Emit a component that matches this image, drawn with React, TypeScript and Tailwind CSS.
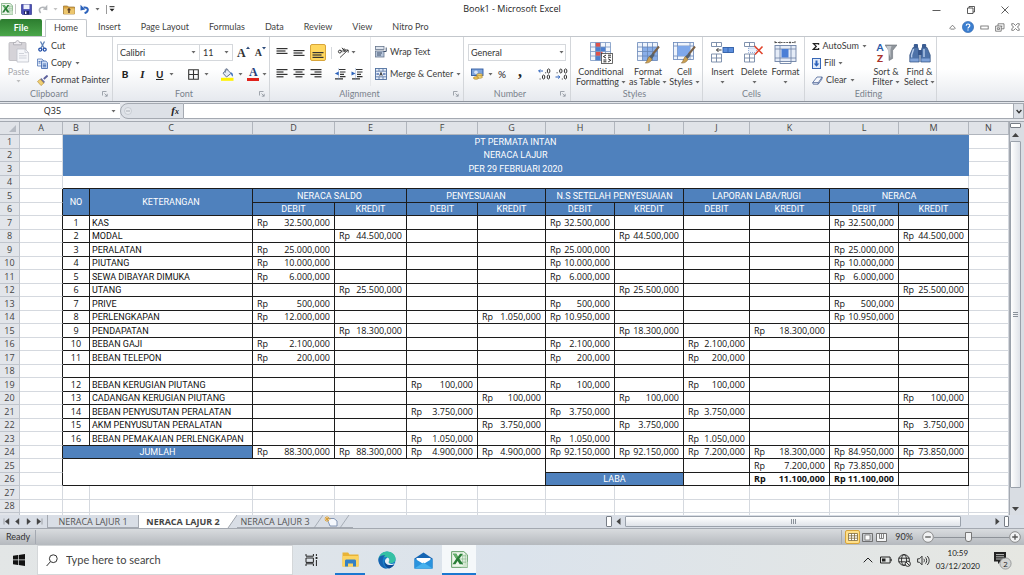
import type { ReactNode } from "react";

type Row = { no: string; name: string; values: Record<string, string> };

const COLUMNS = [
  { name: "A", width: "w-[43px]" },
  { name: "B", width: "w-[27px]" },
  { name: "C", width: "w-[163px]" },
  { name: "D", width: "w-[82px]" },
  { name: "E", width: "w-[72px]" },
  { name: "F", width: "w-[71px]" },
  { name: "G", width: "w-[68px]" },
  { name: "H", width: "w-[69px]" },
  { name: "I", width: "w-[69px]" },
  { name: "J", width: "w-[66px]" },
  { name: "K", width: "w-[80px]" },
  { name: "L", width: "w-[69px]" },
  { name: "M", width: "w-[70px]" },
  { name: "N", width: "" },
];

const MONEY = ["D", "E", "F", "G", "H", "I", "J", "K", "L", "M"];

const TITLES = ["PT PERMATA INTAN", "NERACA LAJUR", "PER 29 FEBRUARI 2020"];

const GROUPS = [
  "NERACA SALDO",
  "PENYESUAIAN",
  "N.S SETELAH PENYESUAIAN",
  "LAPORAN LABA/RUGI",
  "NERACA",
];

const ROWS: Row[] = [
  { no: "1", name: "KAS", values: { D: "32.500,000", H: "32.500,000", L: "32.500,000" } },
  { no: "2", name: "MODAL", values: { E: "44.500,000", I: "44.500,000", M: "44.500,000" } },
  { no: "3", name: "PERALATAN", values: { D: "25.000,000", H: "25.000,000", L: "25.000,000" } },
  { no: "4", name: "PIUTANG", values: { D: "10.000,000", H: "10.000,000", L: "10.000,000" } },
  { no: "5", name: "SEWA DIBAYAR DIMUKA", values: { D: "6.000,000", H: "6.000,000", L: "6.000,000" } },
  { no: "6", name: "UTANG", values: { E: "25.500,000", I: "25.500,000", M: "25.500,000" } },
  { no: "7", name: "PRIVE", values: { D: "500,000", H: "500,000", L: "500,000" } },
  { no: "8", name: "PERLENGKAPAN", values: { D: "12.000,000", G: "1.050,000", H: "10.950,000", L: "10.950,000" } },
  { no: "9", name: "PENDAPATAN", values: { E: "18.300,000", I: "18.300,000", K: "18.300,000" } },
  { no: "10", name: "BEBAN GAJI", values: { D: "2.100,000", H: "2.100,000", J: "2.100,000" } },
  { no: "11", name: "BEBAN TELEPON", values: { D: "200,000", H: "200,000", J: "200,000" } },
  { no: "", name: "", values: {} },
  { no: "12", name: "BEBAN KERUGIAN PIUTANG", values: { F: "100,000", H: "100,000", J: "100,000" } },
  { no: "13", name: "CADANGAN KERUGIAN PIUTANG", values: { G: "100,000", I: "100,000", M: "100,000" } },
  { no: "14", name: "BEBAN PENYUSUTAN PERALATAN", values: { F: "3.750,000", H: "3.750,000", J: "3.750,000" } },
  { no: "15", name: "AKM PENYUSUTAN PERALATAN", values: { G: "3.750,000", I: "3.750,000", M: "3.750,000" } },
  { no: "16", name: "BEBAN PEMAKAIAN PERLENGKAPAN", values: { F: "1.050,000", H: "1.050,000", J: "1.050,000" } },
];

const TOTALS: Record<string, string> = {
  D: "88.300,000",
  E: "88.300,000",
  F: "4.900,000",
  G: "4.900,000",
  H: "92.150,000",
  I: "92.150,000",
  J: "7.200,000",
  K: "18.300,000",
  L: "84.950,000",
  M: "73.850,000",
};

const cell = "border-r border-b p-0";
const plain = cell + " border-[#d5d9df]";
const boxed = cell + " border-[#1c1c1c]";
const blue = boxed + " bg-[#4f81bd] text-center font-normal text-white";

function Caret({ className = "" }: { className?: string }) {
  return (
    <svg className={"shrink-0 " + className} width="5" height="3" viewBox="0 0 5 3">
      <path d="M0.5 0h4L2.5 2.6z" fill="#6a6a6a" />
    </svg>
  );
}

/* ---------- Title bar ---------- */

function ExcelLogo({ size }: { size: number }) {
  return (
    <svg width={size} height={size} viewBox="0 0 16 16">
      <path d="M0.6 0.6h11.5l3.3 3v11.8H0.6z" fill="#eef6ec" stroke="#5c9a62" strokeWidth="0.9" />
      <path d="M8.500 4.500h6M8.500 7.500h6M8.500 10.500h6M11 3v10M13.400 3v10" stroke="#8bbd8f" strokeWidth="0.7" />
      <path d="M1.8 2.500h3.200l1.500 3 2-3h2.700L7.900 7.400l3.600 5.100H8.200L6.200 9.300 4.200 12.500H1.400l3.500-5.100z" fill="#2a7f38" />
      <path d="M1.8 2.500h3.200l1.500 3-1.600 1.900z" fill="#64b06b" />
      <path d="M9.500 15.400l6-5.500v5.500z" fill="#cfe5cd" />
    </svg>
  );
}

function TitleBar() {
  return (
    <header className="grid h-[18px] shrink-0 grid-cols-[1fr_auto_1fr] items-center">
      <div className="flex items-center pl-px">
        <ExcelLogo size={12} />
        <span className="ml-[2px] h-[10px] w-px bg-[#c4c4c4]" />
        <button aria-label="Save" className="ml-[5px]">
          <svg width="11" height="11" viewBox="0 0 11 11">
            <path d="M0.5 0.5h10v10h-9l-1-1z" fill="#4a4fb4" stroke="#33388e" strokeWidth="0.7" />
            <path d="M2.5 0.5h6v4.6h-6z" fill="#eef1fb" />
            <path d="M3 7h5v3.5H3z" fill="#1f2566" />
            <path d="M4 7.6h1.4v2.4H4z" fill="#fff" />
          </svg>
        </button>
        <button aria-label="Redo" className="ml-[6px] flex items-center">
          <svg width="10" height="10" viewBox="0 0 10 10">
            <path d="M2.600 9C0 5.500 2 2.400 6.800 3.600" fill="none" stroke="#b3b6ba" strokeWidth="1.6" />
            <path d="M9.300 0.800v5.400L4.800 5.400z" fill="#b3b6ba" />
          </svg>
          <Caret className="ml-[5px] opacity-40" />
        </button>
        <button aria-label="Open" className="ml-[5px]">
          <svg width="12" height="11" viewBox="0 0 12 11">
            <path d="M0.5 2h4l1 1h6v7h-11z" fill="#d9a441" stroke="#9a7430" strokeWidth="0.7" />
            <path d="M1 4.5h10.5V10H1z" fill="#ecc66d" />
            <path d="M6 3.8l2.1 2.4H6.8V9H5.2V6.2H3.9z" fill="#5b3f27" />
          </svg>
        </button>
        <button aria-label="Undo" className="ml-[5px] flex items-center">
          <svg width="10" height="10" viewBox="0 0 10 10">
            <path d="M4.600 9.200C9 7.600 9 2.600 3.600 3.600" fill="none" stroke="#2c62bb" strokeWidth="2" />
            <path d="M0.500 0.800v5.600L5.200 5.600z" fill="#2c62bb" />
          </svg>
          <Caret className="ml-[5px]" />
        </button>
        <span className="ml-[6px] h-[9px] w-px bg-[#999]" />
        <button aria-label="Customize toolbar" className="ml-[2px]">
          <svg width="6" height="6" viewBox="0 0 6 6">
            <path d="M0.5 0.7h5" stroke="#222" />
            <path d="M0.5 2.8h5L3 5.6z" fill="#222" />
          </svg>
        </button>
      </div>
      <h1 className="text-[9px] leading-[14px] text-[#222]">Book1 - Microsoft Excel</h1>
      <div className="flex items-center justify-end gap-[26px] pr-[15px] pt-[2px]">
        <button aria-label="Minimize">
          <svg width="9" height="9" viewBox="0 0 9 9">
            <path d="M0.5 4.5h8" stroke="#333" strokeWidth="0.8" />
          </svg>
        </button>
        <button aria-label="Restore">
          <svg width="8" height="8" viewBox="0 0 8 8" fill="none" stroke="#333" strokeWidth="0.8">
            <path d="M0.5 2h5.5v5.5H0.5zM2 2V0.5h5.5V6H6" />
          </svg>
        </button>
        <button aria-label="Close">
          <svg width="8" height="8" viewBox="0 0 8 8">
            <path d="M0.5 0.5l7 7M7.5 0.5l-7 7" stroke="#333" strokeWidth="0.8" />
          </svg>
        </button>
      </div>
    </header>
  );
}

/* ---------- Ribbon tabs ---------- */

function RibbonTabs() {
  const tabs = ["Insert", "Page Layout", "Formulas", "Data", "Review", "View", "Nitro Pro"];
  return (
    <nav className="flex h-[18px] shrink-0 items-stretch font-['Lato','Open_Sans',sans-serif] text-[9px] text-[#444]">
      <button className="mt-px w-[42px] rounded-t-[2px] bg-linear-to-b from-[#2c7d2f] to-[#4aa64a] font-bold text-white">
        File
      </button>
      <button className="relative z-10 -mb-px ml-[3px] mt-px w-[42px] rounded-t-[2px] border border-b-0 border-[#c3c7cc] bg-white pb-[2px]">
        Home
      </button>
      <div className="ml-[11px] flex items-center gap-[20px]">
        {tabs.map((tab) => (
          <button key={tab}>{tab}</button>
        ))}
      </div>
      <div className="ml-auto flex items-center gap-[6px] pr-1">
        <button aria-label="Collapse ribbon">
          <svg width="7" height="6" viewBox="0 0 7 6">
            <path d="M0.7 4.2L3.5 1.2l2.8 3-.9.9H1.6z" fill="none" stroke="#666" strokeWidth="0.8" />
          </svg>
        </button>
        <button aria-label="Help">
          <svg width="12" height="12" viewBox="0 0 12 12">
            <circle cx="6" cy="6" r="5.6" fill="#3c7fd0" stroke="#2a62ab" strokeWidth="0.6" />
            <path d="M4.2 4.6C4.3 2.4 7.9 2.5 7.8 4.7 7.7 6 6 6 6 7.4M6 8.4v1.2" fill="none" stroke="#fff" strokeWidth="1.2" />
          </svg>
        </button>
        <button aria-label="Minimize workbook">
          <svg width="9" height="5" viewBox="0 0 9 5">
            <rect x="0.8" y="1" width="7.4" height="3" fill="none" stroke="#666" strokeWidth="0.8" />
          </svg>
        </button>
        <button aria-label="Restore workbook">
          <svg width="10" height="9" viewBox="0 0 10 9" fill="none" stroke="#666" strokeWidth="0.8">
            <path d="M0.6 3h5.6v5.2H0.6zM3 3V0.8h6v5H6.2M2.3 4.8h2.2v1.6H2.3zM6.8 2.5v1.8" />
          </svg>
        </button>
        <button aria-label="Close workbook">
          <svg width="9" height="8" viewBox="0 0 9 8">
            <path d="M0.7 0.7h2L4.5 2.5 6.3 0.7h2L8.1 2.6 6.3 4l1.8 1.5.2 1.8h-2L4.5 5.5 2.7 7.3h-2L0.9 5.5 2.7 4 0.9 2.6z" fill="none" stroke="#666" strokeWidth="0.8" />
          </svg>
        </button>
      </div>
    </nav>
  );
}

/* ---------- Ribbon ---------- */

function Group({ label, width, launcher, children }: { label: string; width: string; launcher?: boolean; children: ReactNode }) {
  return (
    <section className={"flex shrink-0 flex-col border-r border-[#d3d6da] " + width}>
      <div className="min-h-0 flex-1">{children}</div>
      <div className="flex h-[13px] items-center pb-px pr-1 text-[#7a828c]">
        <span className={"flex-1 text-center" + (launcher ? " pr-1" : "")}>{label}</span>
        {launcher && (
          <button aria-label={label + " settings"}>
            <svg width="6" height="6" viewBox="0 0 6 6" fill="none" stroke="#8b929b" strokeWidth="0.8">
              <path d="M0.5 4.5v-4h4M2.5 2.5l2.6 2.6M5.2 2.8v2.4H2.8" />
            </svg>
          </button>
        )}
      </div>
    </section>
  );
}

function SmallButton({ icon, label, caret }: { icon: ReactNode; label: string; caret?: boolean }) {
  return (
    <button className="flex h-[16px] items-center gap-[3px] whitespace-nowrap">
      {icon}
      <span>{label}</span>
      {caret && <Caret />}
    </button>
  );
}

function BigButton({ icon, lines, width }: { icon: ReactNode; lines: string[]; width: string }) {
  return (
    <button className={"flex flex-col items-center whitespace-nowrap leading-[10px] " + width}>
      <span className="mb-[3px] flex h-[23px] items-center">{icon}</span>
      <span>{lines[0]}</span>
      <span className="flex h-[10px] items-center gap-[2px]">
        {lines[1]}
        <Caret />
      </span>
    </button>
  );
}

function Sep() {
  return <span className="h-[12px] w-px bg-[#d5d8dc]" />;
}

function Lines({ widths, y = 0, align = "left" }: { widths: number[]; y?: number; align?: "left" | "center" | "right" }) {
  return (
    <svg width="12" height="12" viewBox="0 0 12 12">
      {widths.map((w, i) => {
        const x = align === "left" ? 0.5 : align === "center" ? (12 - w) / 2 : 11.5 - w;
        return <rect key={i} x={x} y={y + i * 2.4} width={w} height="1.2" fill="#333" />;
      })}
    </svg>
  );
}

function Indent({ flip }: { flip?: boolean }) {
  return (
    <svg width="12" height="12" viewBox="0 0 12 12">
      <path d="M5 1.5h6.5M6 4h5.5M6 6.3h4M6 8.6h5.5M1 10.8h8" stroke="#333" strokeWidth="1.2" />
      <path d={flip ? "M0.5 3.6v4L4.5 5.6z" : "M4.8 3.6v4L0.8 5.6z"} fill="#2c62bb" />
      <path d="M4.5 0.5v11" stroke="#6b8fd0" strokeWidth="0.7" strokeDasharray="1 1" />
    </svg>
  );
}

function Clipboard() {
  return (
    <Group label="Clipboard" width="w-[113px]" launcher>
      <div className="flex pl-[5px] pt-px">
        <button className="flex w-[27px] flex-col items-center pt-[2px] leading-[10px] text-[#a7a9ad]">
          <svg className="mb-[4px]" width="22" height="23" viewBox="0 0 22 23">
            <rect x="1" y="2.5" width="17" height="18" rx="1" fill="#d5d3d8" stroke="#b9b8bd" strokeWidth="0.8" />
            <path d="M5.5 4.8V2.5h2.2c.3-2.6 3.4-2.6 3.7 0h2.2v2.3z" fill="#eceaee" stroke="#aaaab0" strokeWidth="0.8" />
            <path d="M9 9h8l3.6 3.6V22H9z" fill="#f6f7fa" stroke="#bfc2ca" strokeWidth="0.8" />
            <path d="M17 9v3.6h3.6M11 13.5h5M11 15.8h7.6M11 18h7.6" fill="none" stroke="#c6c9d2" strokeWidth="0.8" />
          </svg>
          Paste
          <Caret className="mt-[3px] opacity-40" />
        </button>
        <div className="ml-[5px] flex flex-col gap-px">
          <SmallButton
            label="Cut"
            icon={
              <svg width="11" height="11" viewBox="0 0 11 11">
                <path d="M3.5 0.5L7 7M7.5 0.5L4 7" stroke="#5d81b5" strokeWidth="1.3" />
                <circle cx="3.3" cy="8.6" r="1.5" fill="none" stroke="#2450a8" strokeWidth="1.3" />
                <circle cx="7.7" cy="8.6" r="1.5" fill="none" stroke="#2450a8" strokeWidth="1.3" />
              </svg>
            }
          />
          <SmallButton
            label="Copy"
            caret
            icon={
              <svg width="11" height="11" viewBox="0 0 11 11" strokeWidth="0.8">
                <path d="M0.5 1h4.5l1.5 1.5V8H0.5z" fill="#e9f0fb" stroke="#5377b6" />
                <path d="M4.5 3h4.3l1.7 1.8v5.7h-6z" fill="#cfdff7" stroke="#3560ab" />
                <path d="M1.5 3.5h2M1.5 5h2M5.8 6h3.4M5.8 7.4h3.4M5.8 8.8h3.4" stroke="#3560ab" />
              </svg>
            }
          />
          <SmallButton
            label="Format Painter"
            icon={
              <svg width="11" height="11" viewBox="0 0 11 11">
                <path d="M10.6 0.6L6.8 4" stroke="#5a5f9b" strokeWidth="2" />
                <path d="M4.3 3l3.8 4-1.6 1.2-3.5-3.8z" fill="#6b6f9e" />
                <path d="M3.2 4.2l3.6 4L4 10.6 0.5 6.5z" fill="#f0cf72" stroke="#b18b33" strokeWidth="0.6" />
              </svg>
            }
          />
        </div>
      </div>
    </Group>
  );
}

function FontGroup() {
  return (
    <Group label="Font" width="w-[157px]" launcher>
      <div className="flex items-center pl-[4px] pt-[7px]">
        <div className="relative w-[83px]">
          <select aria-label="Font name" className="h-[17px] w-full appearance-none border border-[#d5d8dc] bg-white pl-[2px] leading-[14px] text-[#333]">
            <option>Calibri</option>
          </select>
          <Caret className="absolute right-1 top-[7px]" />
        </div>
        <div className="relative w-[33px]">
          <select aria-label="Font size" className="h-[17px] w-full appearance-none border border-l-0 border-[#d5d8dc] bg-white pl-[3px] leading-[14px] text-[#333]">
            <option>11</option>
          </select>
          <Caret className="absolute right-1 top-[7px]" />
        </div>
        <button aria-label="Increase font size" className="ml-1 flex font-['Liberation_Serif',serif] text-[12px] font-bold leading-[14px] text-[#333]">
          A
          <svg width="4" height="4" viewBox="0 0 4 4">
            <path d="M0 3l2-2.6L4 3z" fill="#2c4a7a" />
          </svg>
        </button>
        <button aria-label="Decrease font size" className="ml-[5px] flex font-['Liberation_Serif',serif] text-[10px] font-bold leading-[14px] text-[#333]">
          A
          <svg width="4" height="4" viewBox="0 0 4 4">
            <path d="M0 1l2 2.6L4 1z" fill="#2c4a7a" />
          </svg>
        </button>
      </div>
      <div className="flex items-center pl-[8px] pt-[5px] text-[#222]">
        <button className="w-[8px] text-[10px] font-black leading-[16px]">B</button>
        <button className="ml-[10px] w-[7px] font-['Liberation_Serif',serif] text-[11px] font-bold italic leading-[16px]">I</button>
        <button className="ml-[10px] flex items-center text-[10px] font-bold leading-[16px]">
          <span className="underline">U</span>
          <Caret className="ml-[6px]" />
        </button>
        <span className="mx-[7px]">
          <Sep />
        </span>
        <button aria-label="Borders" className="flex items-center gap-[5px]">
          <svg width="11" height="11" viewBox="0 0 11 11">
            <path d="M0.7 0.7h9.6v9.6H0.7zM5.5 0.7v9.6M0.7 5.5h9.6" fill="none" stroke="#333" strokeWidth="1.1" />
          </svg>
          <Caret />
        </button>
        <span className="mx-[6px]">
          <Sep />
        </span>
        <button aria-label="Fill color" className="flex items-center gap-1">
          <svg width="13" height="13" viewBox="0 0 13 13">
            <path d="M2 5.2L6 1.4l4 4L5.5 9z" fill="#e5ecf6" stroke="#52627f" strokeWidth="0.9" />
            <path d="M4.2 4.8V2.2c0-2 2.6-2 2.6 0" fill="none" stroke="#52627f" strokeWidth="0.8" />
            <path d="M9.4 4.3c2.6.4 2.8 2 2.4 4.2-1 0-1.6-1.8-2.4-4.2z" fill="#3b6fc0" />
            <rect x="0" y="9.8" width="12.5" height="3" fill="#fff200" />
          </svg>
          <Caret />
        </button>
        <button aria-label="Font color" className="ml-[4px] flex items-center gap-[3px]">
          <span className="flex h-[14px] w-[12px] items-center justify-center border-b-3 border-[#e0211b] font-['Liberation_Serif',serif] text-[12px] font-bold leading-[11px] text-[#27417c]">
            A
          </span>
          <Caret />
        </button>
      </div>
    </Group>
  );
}

function Alignment() {
  return (
    <Group label="Alignment" width="w-[194px]" launcher>
      <div className="flex">
        <div>
          <div className="flex items-center gap-[5px] pl-[6px] pt-[7px]">
            <button aria-label="Top align"><Lines widths={[11, 9, 11]} y={1} /></button>
            <button aria-label="Middle align"><Lines widths={[11, 9, 11]} y={3} /></button>
            <button aria-label="Bottom align" className="flex h-[17px] w-[16px] items-center justify-center rounded-[2px] border border-[#d8a53a] bg-[#ffd75e]">
              <Lines widths={[11, 9, 11]} y={5} />
            </button>
            <Sep />
            <button aria-label="Orientation" className="flex items-center gap-px">
              <svg width="13" height="12" viewBox="0 0 13 12" fill="none" stroke="#333">
                <path d="M3 10.5L11 3M8.6 3h2.6v2.6" strokeWidth="0.9" />
                <circle cx="2.8" cy="4.6" r="1.4" />
                <path d="M3.4 2.8l2 2.4M5 0.8l3.4 4" />
                <circle cx="7.2" cy="3.2" r="1.2" />
              </svg>
              <Caret />
            </button>
          </div>
          <div className="flex items-center gap-[5px] pl-[6px] pt-[7px]">
            <button aria-label="Align left"><Lines widths={[11, 7, 11, 7]} y={1} /></button>
            <button aria-label="Center"><Lines widths={[11, 7, 11, 7]} y={1} align="center" /></button>
            <button aria-label="Align right"><Lines widths={[11, 7, 11, 7]} y={1} align="right" /></button>
            <span className="ml-[2px]"><Sep /></span>
            <button aria-label="Decrease indent"><Indent /></button>
            <button aria-label="Increase indent"><Indent flip /></button>
          </div>
        </div>
        <div className="ml-auto flex w-[93px] flex-col gap-[6px] border-l border-[#e6e8eb] pb-1 pl-[4px] pt-[7px]">
          <SmallButton
            label="Wrap Text"
            icon={
              <svg width="12" height="12" viewBox="0 0 12 12">
                <rect x="0.5" y="0.5" width="8.5" height="3" fill="#dfe5ee" stroke="#66758c" strokeWidth="0.8" />
                <rect x="0.5" y="5" width="8.5" height="6" fill="#b7c6dc" stroke="#66758c" strokeWidth="0.8" />
                <path d="M2 7h5M2 9h4" stroke="#41526d" />
                <path d="M11.2 1.5v4H8.5" fill="none" stroke="#41526d" />
              </svg>
            }
          />
          <SmallButton
            label="Merge &amp; Center"
            caret
            icon={
              <svg width="12" height="12" viewBox="0 0 12 12">
                <rect x="0.5" y="0.5" width="11" height="11" fill="#e6eefa" stroke="#50709f" strokeWidth="0.9" />
                <path d="M0.5 3.2h11M0.5 8.8h11M4 0.5v2.7M8 0.5v2.7M4 8.8v2.7M8 8.8v2.7" stroke="#50709f" strokeWidth="0.8" />
                <path d="M1.2 6h2.3M10.8 6H8.5M2.6 5l1 1-1 1M9.4 5l-1 1 1 1" fill="none" stroke="#28519b" strokeWidth="0.8" />
                <path d="M4.7 7.7L6 4.4l1.3 3.3M5.1 6.7h1.8" fill="none" stroke="#222" strokeWidth="0.8" />
              </svg>
            }
          />
        </div>
      </div>
    </Group>
  );
}

function Decimals({ up }: { up?: boolean }) {
  return (
    <svg width="13" height="12" viewBox="0 0 13 12" fill="none" stroke="#333" strokeWidth="1">
      <path d={up ? "M5 3H0.6M2.3 1.4L0.7 3l1.6 1.6" : "M0.5 9H5M3.2 7.4L4.8 9l-1.6 1.6"} stroke="#2c62bb" />
      <ellipse cx="10.6" cy="3" rx="1.3" ry="2.1" />
      <path d={up ? "M7.2 4.8h1M1.6 11h1" : "M1.6 4.8h1M6.8 11h1"} />
      {up ? <ellipse cx="5.6" cy="9" rx="1.2" ry="2" /> : <ellipse cx="5.8" cy="3" rx="1.2" ry="2" />}
      <ellipse cx="10.4" cy="9" rx="1.2" ry="2" />
    </svg>
  );
}

function NumberGroup() {
  return (
    <Group label="Number" width="w-[107px]" launcher>
      <div className="relative mx-[4px] mt-[7px]">
        <select aria-label="Number format" className="block h-[17px] w-full appearance-none border border-[#d5d8dc] bg-white pl-[2px] leading-[14px] text-[#333]">
          <option>General</option>
        </select>
        <Caret className="absolute right-[2px] top-[7px]" />
      </div>
      <div className="flex items-center pl-[7px] pt-[6px] text-[10px] leading-[14px] text-[#222]">
        <button aria-label="Accounting format" className="flex items-center gap-1">
          <svg width="13" height="12" viewBox="0 0 13 12">
            <rect x="0.5" y="1" width="11.5" height="6.5" fill="#7ea4dc" stroke="#2f5a9f" strokeWidth="0.9" />
            <circle cx="5" cy="4.2" r="1.8" fill="#dbe7f8" />
            <ellipse cx="8.5" cy="7" rx="3" ry="1.3" fill="#f7dc7e" stroke="#a87a1b" strokeWidth="0.6" />
            <ellipse cx="8.5" cy="9" rx="3" ry="1.3" fill="#f7dc7e" stroke="#a87a1b" strokeWidth="0.6" />
            <ellipse cx="5" cy="10" rx="2.6" ry="1.3" fill="#efc558" stroke="#a87a1b" strokeWidth="0.6" />
          </svg>
          <Caret />
        </button>
        <button className="ml-[5px]">%</button>
        <button className="ml-[12px] pb-1 font-['Liberation_Serif',serif] text-[16px] font-bold leading-[8px]">,</button>
        <span className="mx-[8px]"><Sep /></span>
        <button aria-label="Increase decimal"><Decimals up /></button>
        <button aria-label="Decrease decimal" className="ml-[4px]"><Decimals /></button>
      </div>
    </Group>
  );
}

function Brush() {
  return (
    <>
      <path d="M22 4.5l-6.5 8" stroke="#7b6248" strokeWidth="2" />
      <path d="M15.8 11l2 1.8-3 4.4-2.8-2.4z" fill="#54616f" />
      <path d="M12.2 14.5l2.9 2.6c-1.4 3.4-4 4-6.8 4 2-1.6 2-4.6 3.9-6.6z" fill="#caa052" stroke="#7a5c2b" strokeWidth="0.5" />
    </>
  );
}

function Styles() {
  return (
    <Group label="Styles" width="w-[132px]">
      <div className="flex pl-[3px] pt-[4px]">
        <BigButton
          width="w-[54px]"
          lines={["Conditional", "Formatting"]}
          icon={
            <svg width="23" height="22" viewBox="0 0 23 22">
              <rect x="0.5" y="0.5" width="20" height="18" fill="#f2f6fc" />
              <rect x="5.5" y="0.5" width="5" height="5" fill="#e0524a" />
              <rect x="5.5" y="5" width="10" height="4.5" fill="#4c7fd0" />
              <rect x="5.5" y="9.5" width="7" height="4.5" fill="#e0524a" />
              <rect x="5.5" y="14" width="5" height="4.5" fill="#4c7fd0" />
              <path d="M0.5 0.5h20v18H0.5zM5.5 0.5v18M10.5 0.5v18M15.5 0.5v18M0.5 5h20M0.5 9.5h20M0.5 14h20" fill="none" stroke="#7795c2" strokeWidth="0.8" />
              <rect x="11.5" y="11.5" width="11" height="10" fill="#fff" stroke="#444" strokeWidth="0.8" />
              <path d="M16 13l-2.6 1.6 2.6 1.5M13.4 18h3M13.4 19.8h3M18 13.2h3M18 15.2h3M18.2 16.8l2.6 1.5-2.6 1.6" fill="none" stroke="#111" strokeWidth="0.9" />
            </svg>
          }
        />
        <BigButton
          width="w-[40px]"
          lines={["Format", "as Table"]}
          icon={
            <svg width="23" height="22" viewBox="0 0 23 22">
              <rect x="0.5" y="0.5" width="20" height="18" fill="#eff4fc" />
              <rect x="5.5" y="5" width="15" height="13.5" fill="#89aee8" />
              <path d="M0.5 0.5h20v18H0.5zM5.5 0.5v18M10.5 0.5v18M15.5 0.5v18M0.5 5h20M0.5 9.5h20M0.5 14h20" fill="none" stroke="#6786b8" strokeWidth="0.8" />
              <Brush />
            </svg>
          }
        />
        <BigButton
          width="w-[33px]"
          lines={["Cell", "Styles"]}
          icon={
            <svg width="23" height="22" viewBox="0 0 23 22">
              <rect x="0.5" y="0.5" width="20" height="17" fill="#eff4fc" stroke="#6786b8" strokeWidth="0.8" />
              <path d="M4.5 0.5v17M17 0.5v17M0.5 4h20M0.5 14h20" stroke="#6786b8" strokeWidth="0.8" />
              <rect x="4.5" y="4" width="12.5" height="10" fill="#7fa8ea" />
              <Brush />
            </svg>
          }
        />
      </div>
    </Group>
  );
}

function Cells() {
  const rows = "M0.5 0.5h10v4H0.5zM0.5 12h10v8H0.5zM5.5 0.5v4M5.5 12v8M0.5 16h10";
  return (
    <Group label="Cells" width="w-[102px]">
      <div className="flex pl-[4px] pt-[4px]">
        <BigButton
          width="w-[31px]"
          lines={["Insert", ""]}
          icon={
            <svg width="23" height="21" viewBox="0 0 23 21">
              <path d={rows} fill="#fff" stroke="#7286a5" strokeWidth="0.9" />
              <rect x="12" y="5.5" width="10.5" height="5" fill="#5b8edd" stroke="#2f5da5" strokeWidth="0.9" />
              <path d="M17 5.5v5" stroke="#2f5da5" strokeWidth="0.8" />
              <path d="M10.5 8H5.5M7.5 6L5.5 8l2 2" fill="none" stroke="#222" strokeWidth="0.9" />
            </svg>
          }
        />
        <BigButton
          width="w-[32px]"
          lines={["Delete", ""]}
          icon={
            <svg width="20" height="21" viewBox="0 0 20 21">
              <path d={rows} fill="#fff" stroke="#7286a5" strokeWidth="0.9" />
              <rect x="4.5" y="6" width="8" height="4.5" fill="#e9f0fb" stroke="#7b9ad0" strokeWidth="0.8" strokeDasharray="1 1" />
              <path d="M10.5 4l8 8M18.5 4.5l-7.5 8" stroke="#e0442c" strokeWidth="1.6" />
            </svg>
          }
        />
        <BigButton
          width="w-[31px]"
          lines={["Format", ""]}
          icon={
            <svg width="23" height="23" viewBox="0 0 23 23">
              <path d="M1 1.5h20M1 0v3M21 0v3M6 0.5v2M16 0.5v2" stroke="#333" strokeWidth="0.8" strokeDasharray="2 0.8" />
              <rect x="1" y="4.5" width="21" height="16" fill="#e5ecf7" stroke="#6d82a5" strokeWidth="0.9" />
              <path d="M6 4.5v16M17 4.5v16M1 8h21M1 17h21" stroke="#6d82a5" strokeWidth="0.8" />
              <rect x="7.5" y="8" width="7" height="8.5" fill="#4b7fd6" />
              <path d="M6 20.5v2h11v-2" fill="none" stroke="#6d82a5" strokeWidth="0.9" />
            </svg>
          }
        />
      </div>
    </Group>
  );
}

function Editing() {
  return (
    <Group label="Editing" width="w-[132px]">
      <div className="flex">
        <div className="flex w-[62px] flex-col gap-px pl-[7px] pt-px">
          <SmallButton
            label="AutoSum"
            caret
            icon={
              <svg width="9" height="9" viewBox="0 0 9 9">
                <path d="M7.8 2.4V1H1.6L5 4.4 1.6 7.9h6.2V6.4" fill="none" stroke="#222" strokeWidth="1.5" />
              </svg>
            }
          />
          <SmallButton
            label="Fill"
            caret
            icon={
              <svg width="9" height="11" viewBox="0 0 9 11">
                <rect x="0.5" y="0.5" width="8" height="10" fill="#dfeafa" stroke="#3867b5" />
                <path d="M3.5 2.5h2v3h1.8L4.5 8.8 1.7 5.5h1.8z" fill="#2c62bb" />
              </svg>
            }
          />
          <SmallButton
            label="Clear"
            caret
            icon={
              <svg width="11" height="9" viewBox="0 0 11 9">
                <path d="M0.7 6.6L5 1h5.2L6.3 6.6zM0.7 6.6l.5 1.6h4.9l.2-1.6M6.2 8.2L10 3V1" fill="#f6f8fc" stroke="#4a6296" strokeWidth="0.8" />
              </svg>
            }
          />
        </div>
        <div className="flex pt-[4px]">
          <BigButton
            width="w-[38px]"
            lines={["Sort &", "Filter"]}
            icon={
              <span className="flex">
                <span className="flex w-[9px] flex-col items-center text-[10px] font-black leading-[11px]">
                  <span className="h-[11px] text-[#2a5caa]">A</span>
                  <span className="h-[11px] text-[#a8322c]">Z</span>
                </span>
                <svg width="12" height="20" viewBox="0 0 12 20">
                  <path d="M0 3h12L7.6 8.5v8L4 18.5v-10z" fill="#8f959c" stroke="#6d737a" strokeWidth="0.6" />
                  <path d="M1.5 4h5L5.500 8v8z" fill="#c5c9ce" />
                </svg>
              </span>
            }
          />
          <BigButton
            width="w-[29px]"
            lines={["Find &", "Select"]}
            icon={
              <svg width="22" height="20" viewBox="0 0 22 20">
                <path d="M4 4.5h5l1.2 6V19H0.8v-7z" fill="#4d72a8" stroke="#2f4f80" strokeWidth="0.7" />
                <path d="M18 4.5h-5l-1.2 6V19h9.4v-7z" fill="#4d72a8" stroke="#2f4f80" strokeWidth="0.7" />
                <rect x="4.8" y="1" width="4.2" height="4" rx="1" fill="#3a5c92" />
                <rect x="13" y="1" width="4.2" height="4" rx="1" fill="#3a5c92" />
                <rect x="9" y="7" width="4" height="5" fill="#35558a" />
                <path d="M4.6 6L2.6 12v2.5M15 6v8" stroke="#b7cdec" strokeWidth="1.4" fill="none" />
                <path d="M1.2 15.5h8.4v3H1.2zM12.4 15.5h8.4v3h-8.4z" fill="#7fa2d8" />
              </svg>
            }
          />
        </div>
      </div>
    </Group>
  );
}

function Ribbon() {
  return (
    <div className="flex h-[66px] shrink-0 border-t border-b border-t-[#c3c7cc] border-b-[#8d939c] bg-linear-to-b from-white via-white to-[#e6e9ee] font-['Lato','Open_Sans',sans-serif] text-[9px] text-[#3c3c3c]">
      <Clipboard />
      <FontGroup />
      <Alignment />
      <NumberGroup />
      <Styles />
      <Cells />
      <Editing />
    </div>
  );
}

/* ---------- Formula bar ---------- */

function FormulaBar() {
  return (
    <div className="flex h-[20px] shrink-0 items-stretch border-b border-[#a4a9b1] bg-[#e4e7ec] pb-[2px] pt-px">
      <div className="flex w-[120px] items-center border-y border-[#a4a9b1] bg-white pr-1">
        <input aria-label="Name box" defaultValue="Q35" className="w-0 flex-1 pr-[6px] text-center text-[9px] leading-[14px] text-[#222] outline-none" />
        <Caret />
      </div>
      <div className="flex w-[64px] items-center justify-between rounded-l-full border border-[#a4a9b1] bg-[#dde1e7] pl-[3px] pr-[4px]">
        <svg width="8" height="8" viewBox="0 0 8 8">
          <circle cx="4" cy="4" r="3.5" fill="#e7eaee" stroke="#c0c5cc" strokeWidth="0.8" />
          <path d="M2 4h4" stroke="#a9aeb6" />
        </svg>
        <button aria-label="Insert function" className="font-['Liberation_Serif',serif] text-[11px] font-bold italic leading-[14px] text-[#222]">
          f<span className="text-[8px]">x</span>
        </button>
      </div>
      <input aria-label="Formula" className="w-0 flex-1 border-y border-[#a4a9b1] bg-white px-1 text-[9px] outline-none" />
      <button aria-label="Expand formula bar" className="flex w-[11px] items-center justify-center border border-[#a4a9b1] bg-[#dde1e7]">
        <svg width="6" height="5" viewBox="0 0 6 5">
          <path d="M0.6 1L3 3.6 5.4 1" fill="none" stroke="#333" strokeWidth="1.4" />
        </svg>
      </button>
    </div>
  );
}

/* ---------- Worksheet ---------- */

function Money({ value }: { value?: string }) {
  if (!value) return null;
  return (
    <div className="flex justify-between whitespace-nowrap pl-1 pr-1 font-['Open_Sans',sans-serif]">
      <span>Rp</span>
      <span>{value}</span>
    </div>
  );
}

function SheetRow({ n, edge = plain, children }: { n?: number; edge?: string; children: ReactNode }) {
  return (
    <tr className="odd:h-[14px] even:h-[13px]">
      <th scope="row" className={cell + " border-[#c0c5cd] bg-[#e2e5ea] text-center font-['Open_Sans',sans-serif] font-normal text-[#444]"}>
        {n}
      </th>
      <td className={cell + " border-b-[#d5d9df] " + edge} />
      {children}
      <td className={plain} />
    </tr>
  );
}

const light = "border-r-[#d5d9df]";
const dark = "border-r-[#1c1c1c]";

function Worksheet() {
  return (
    <table className="w-full table-fixed border-separate border-spacing-0 font-['Roboto','Open_Sans',sans-serif] text-[9px] leading-[12px] text-[#111]">
      <colgroup>
        <col className="w-[20px]" />
        {COLUMNS.map((c) => (
          <col key={c.name} className={c.width} />
        ))}
      </colgroup>
      <thead className="font-['Open_Sans',sans-serif]">
        <tr className="h-[13px] bg-[#e0e3e8] text-[#444]">
          <th aria-label="Select all" className={cell + " border-[#b0b5bd]"}>
            <svg className="ml-auto mr-[3px]" width="7" height="7" viewBox="0 0 7 7">
              <path d="M7 0v7H0z" fill="#b6bbc3" />
            </svg>
          </th>
          {COLUMNS.map((c) => (
            <th key={c.name} scope="col" className={cell + " border-[#b0b5bd] font-normal"}>
              {c.name}
            </th>
          ))}
        </tr>
      </thead>
      <tbody>
        {TITLES.map((title, i) => (
          <SheetRow key={title} n={i + 1} edge={light}>
            <td colSpan={12} className={cell + " border-[#4f81bd] bg-[#4f81bd] text-center text-white"}>
              {title}
            </td>
          </SheetRow>
        ))}
        <SheetRow n={4} edge={light}>
          <td colSpan={12} className={cell + " border-r-[#d5d9df] border-b-[#1c1c1c]"} />
        </SheetRow>
        <SheetRow n={5} edge={dark}>
          <td rowSpan={2} className={blue}>NO</td>
          <td rowSpan={2} className={blue}>KETERANGAN</td>
          {GROUPS.map((g) => (
            <td key={g} colSpan={2} className={blue}>{g}</td>
          ))}
        </SheetRow>
        <SheetRow n={6} edge={dark}>
          {MONEY.map((c, i) => (
            <td key={c} className={blue}>{i % 2 ? "KREDIT" : "DEBIT"}</td>
          ))}
        </SheetRow>
        {ROWS.map((row, i) => (
          <SheetRow key={i} n={i + 7} edge={dark}>
            <td className={boxed + " text-center font-['Open_Sans',sans-serif]"}>{row.no}</td>
            <td className={boxed + " whitespace-nowrap"}>
              <div className="pl-[2px]">{row.name}</div>
            </td>
            {MONEY.map((c) => (
              <td key={c} className={boxed}>
                <Money value={row.values[c]} />
              </td>
            ))}
          </SheetRow>
        ))}
        <SheetRow n={24} edge={dark}>
          <td colSpan={2} className={blue}>JUMLAH</td>
          {MONEY.map((c) => (
            <td key={c} className={boxed}>
              <Money value={TOTALS[c]} />
            </td>
          ))}
        </SheetRow>
        <SheetRow n={25} edge={dark}>
          <td colSpan={6} rowSpan={2} className={boxed} />
          <td colSpan={2} className={boxed} />
          <td className={boxed} />
          <td className={boxed}><Money value="7.200,000" /></td>
          <td className={boxed}><Money value="73.850,000" /></td>
          <td className={boxed} />
        </SheetRow>
        <SheetRow n={26} edge={dark}>
          <td colSpan={2} className={blue}>LABA</td>
          <td className={boxed} />
          <td className={boxed + " font-bold"}><Money value="11.100,000" /></td>
          <td className={boxed + " font-bold"}><Money value="11.100,000" /></td>
          <td className={boxed} />
        </SheetRow>
        {[27, 28, undefined].map((n, i) => (
          <SheetRow key={i} n={n} edge={light}>
            {COLUMNS.slice(1, 13).map((c) => (
              <td key={c.name} className={plain} />
            ))}
          </SheetRow>
        ))}
      </tbody>
    </table>
  );
}

function VerticalScroll() {
  return (
    <div className="flex w-[12px] shrink-0 flex-col items-center border-l border-[#a4a9b1] bg-[#d9dde3]">
      <span className="mt-px h-[5px] w-full rounded-[1px] border border-[#777d86] bg-white" />
      <button aria-label="Scroll up" className="flex h-[13px] items-center">
        <svg width="7" height="4" viewBox="0 0 7 4"><path d="M0 4L3.5 0 7 4z" fill="#444" /></svg>
      </button>
      <div className="flex w-full flex-1 flex-col">
        <div className="flex flex-[24] flex-col items-center justify-center gap-px rounded-[1px] border border-[#9aa1ab] bg-linear-to-r from-white to-[#dfe3e9]">
          <span className="h-px w-[5px] bg-[#8b929b]" />
          <span className="h-px w-[5px] bg-[#8b929b]" />
          <span className="h-px w-[5px] bg-[#8b929b]" />
        </div>
        <div className="flex-1" />
      </div>
      <button aria-label="Scroll down" className="flex h-[13px] items-center">
        <svg width="7" height="4" viewBox="0 0 7 4"><path d="M0 0h7L3.5 4z" fill="#444" /></svg>
      </button>
    </div>
  );
}

function SheetTabs() {
  const moves = [
    { label: "First sheet", d: "M1 0.5v6M6 0.5v6L2.2 3.5z" },
    { label: "Previous sheet", d: "M5 0.5v6L1.5 3.5z" },
    { label: "Next sheet", d: "M2 0.5v6l3.5-3z" },
    { label: "Last sheet", d: "M1 0.5v6l3.8-3zM6 0.5v6" },
  ];
  return (
    <div className="flex h-[13px] shrink-0 items-stretch bg-[#d9dee6] text-[9px] leading-[13px] text-[#555]">
      <div className="flex items-center gap-1 border-r border-[#a4a9b1] pl-[3px] pr-[4px]">
        {moves.map((m) => (
          <button key={m.label} aria-label={m.label}>
            <svg width="7" height="7" viewBox="0 0 7 7">
              <path d={m.d} fill="#444" stroke="#444" strokeWidth="0.4" />
            </svg>
          </button>
        ))}
      </div>
      <button className="w-[90px] whitespace-nowrap border-b border-[#a4a9b1]">NERACA LAJUR 1</button>
      <button className="w-[89px] whitespace-nowrap border-l border-[#a4a9b1] bg-white font-bold text-[#444]">NERACA LAJUR 2</button>
      <svg width="10" height="13" viewBox="0 0 10 13">
        <path d="M0 0h10L1 13H0z" fill="#fff" />
        <path d="M10 0L1 13" stroke="#8b929b" strokeWidth="0.8" />
      </svg>
      <button className="w-[76px] whitespace-nowrap border-b border-[#a4a9b1]">NERACA LAJUR 3</button>
      <button aria-label="Insert worksheet" className="flex items-center border-b border-[#a4a9b1]">
        <svg width="40" height="13" viewBox="0 0 40 13">
          <path d="M1 13L10 0M27 13L36 0" stroke="#9aa1ab" strokeWidth="0.8" />
          <path d="M14 3.5h7l3 2.5v5h-7z" fill="#f5f8fd" stroke="#6d82a5" strokeWidth="0.8" />
          <path d="M14 1v6M11.5 4h6M12 2l4 4M16 2l-4 4" stroke="#e3a22c" strokeWidth="0.9" />
        </svg>
      </button>
      <div className="ml-auto flex w-[41%] items-center">
        <span className="ml-[2px] h-[11px] w-[6px] rounded-[1px] border border-[#777d86] bg-white" />
        <button aria-label="Scroll left" className="ml-[4px]">
          <svg width="5" height="7" viewBox="0 0 5 7"><path d="M4.5 0v7L0.5 3.5z" fill="#444" /></svg>
        </button>
        <div className="ml-[4px] flex h-[11px] flex-1 items-center justify-center gap-px rounded-[1px] border border-[#9aa1ab] bg-linear-to-b from-white to-[#dfe3e9]">
          <span className="h-[5px] w-px bg-[#8b929b]" />
          <span className="h-[5px] w-px bg-[#8b929b]" />
          <span className="h-[5px] w-px bg-[#8b929b]" />
        </div>
        <button aria-label="Scroll right" className="ml-[34px]">
          <svg width="5" height="7" viewBox="0 0 5 7"><path d="M0.5 0v7l4-3.5z" fill="#444" /></svg>
        </button>
        <span className="ml-[4px] mr-[15px] h-[11px] w-[5px] rounded-[1px] border border-[#777d86] bg-white" />
      </div>
    </div>
  );
}

function StatusBar() {
  return (
    <footer className="flex h-[17px] shrink-0 items-center border-t border-[#a4a9b1] bg-linear-to-b from-[#d9dcdf] to-[#b5b9be] pr-[3px] font-['Lato','Open_Sans',sans-serif] text-[9px] text-[#333]">
      <span className="w-[36px] border-r border-[#a4a9b1] pl-[6px] leading-[14px]">Ready</span>
      <div className="ml-auto flex items-center border-l border-[#a4a9b1] pl-[3px]">
        <button aria-label="Normal view" className="flex h-[14px] w-[15px] items-center justify-center rounded-[2px] border border-[#d8a53a] bg-[#ffe08a]">
          <svg width="10" height="8" viewBox="0 0 10 8">
            <path d="M0.5 0.5h9v7h-9zM0.5 2.8h9M0.5 5.2h9M3.5 0.5v7M6.5 0.5v7" fill="#fff" stroke="#7d6a3c" strokeWidth="0.8" />
          </svg>
        </button>
        <button aria-label="Page layout view" className="ml-[2px]">
          <svg width="11" height="9" viewBox="0 0 11 9">
            <path d="M0.5 0.5h10v8h-10z" fill="#c7cace" stroke="#666" strokeWidth="0.9" />
            <path d="M3 2h5v5H3z" fill="#fff" stroke="#777" strokeWidth="0.8" />
          </svg>
        </button>
        <button aria-label="Page break view" className="ml-[3px]">
          <svg width="11" height="9" viewBox="0 0 11 9">
            <path d="M0.5 0.5h10v8h-10z" fill="#f4f5f6" stroke="#666" strokeWidth="0.9" />
            <path d="M3.5 0.5v5h4v-5M5.5 0.5v5" fill="none" stroke="#777" strokeWidth="0.9" />
          </svg>
        </button>
        <button className="ml-[8px]">90%</button>
        <button aria-label="Zoom out" className="ml-[9px]">
          <svg width="12" height="12" viewBox="0 0 12 12">
            <circle cx="6" cy="6" r="5.3" fill="#f1f2f3" stroke="#777" strokeWidth="0.8" />
            <path d="M3.2 6h5.6" stroke="#555" strokeWidth="1.3" />
          </svg>
        </button>
        <input
          type="range"
          aria-label="Zoom"
          defaultValue={46}
          className="h-[12px] w-[75px] appearance-none bg-[linear-gradient(#8d9298,#8d9298)] bg-[length:100%_1px] bg-center bg-no-repeat [&::-webkit-slider-thumb]:h-[10px] [&::-webkit-slider-thumb]:w-[7px] [&::-webkit-slider-thumb]:appearance-none [&::-webkit-slider-thumb]:rounded-b-[3px] [&::-webkit-slider-thumb]:border [&::-webkit-slider-thumb]:border-[#777] [&::-webkit-slider-thumb]:bg-[#f1f2f3]"
        />
        <button aria-label="Zoom in">
          <svg width="12" height="12" viewBox="0 0 12 12">
            <circle cx="6" cy="6" r="5.3" fill="#f1f2f3" stroke="#777" strokeWidth="0.8" />
            <path d="M3.2 6h5.6M6 3.2v5.6" stroke="#555" strokeWidth="1.3" />
          </svg>
        </button>
      </div>
    </footer>
  );
}

/* ---------- Windows taskbar ---------- */

function Taskbar() {
  return (
    <div className="flex h-[30px] shrink-0 items-stretch bg-linear-to-r from-[#e3e6e6] via-[#dbe3ec] to-[#e6e7e2] text-[#222]">
      <button aria-label="Start" className="flex w-[37px] items-center justify-center">
        <svg width="12" height="12" viewBox="0 0 12 12">
          <path d="M0 1.7l5-.7v4.6H0zM5.7.9L12 0v5.6H5.7zM0 6.3h5v4.7l-5-.7zM5.7 6.3H12V12l-6.3-.9z" fill="#111" />
        </svg>
      </button>
      <label className="flex w-[256px] items-center gap-[8px] border border-[#d4d7d9] bg-white pl-[8px]">
        <svg width="12" height="13" viewBox="0 0 12 13" fill="none" stroke="#333">
          <circle cx="7.3" cy="4.7" r="3.9" />
          <path d="M4.5 7.6L0.6 12" />
        </svg>
        <input aria-label="Search" placeholder="Type here to search" className="w-0 flex-1 font-['Lato','Open_Sans',sans-serif] text-[11px] outline-none placeholder:text-[#444]" />
      </label>
      <button aria-label="Task view" className="flex w-[37px] items-center justify-center">
        <svg width="13" height="12" viewBox="0 0 13 12" fill="none" stroke="#222">
          <path d="M1 0v2.2h7.4V0M1 4h7.4v4.4H1zM1 12V9.8h7.4V12M11.4 0v2M11.4 6v6" />
          <path d="M10.6 3h1.8v2h-1.8z" fill="#222" stroke="none" />
        </svg>
      </button>
      <button aria-label="File Explorer" className="ml-[5px] flex w-[30px] items-center justify-center border-b-2 border-[#1b78d0]">
        <svg width="17" height="15" viewBox="0 0 17 15">
          <path d="M0.5 0.5h5.6l1.4 2h9v12h-16z" fill="#e8b337" />
          <path d="M0.5 4h16v10.5h-16z" fill="#fcd462" />
          <path d="M3 14.5V9c0-1 .6-1.5 1.5-1.5h8c.9 0 1.5.5 1.5 1.5v5.500h-3v-3H6v3z" fill="#3480c4" />
        </svg>
      </button>
      <button aria-label="Edge" className="ml-[3px] flex w-[37px] items-center justify-center">
        <svg width="18" height="18" viewBox="0 0 18 18">
          <circle cx="9" cy="9" r="8.6" fill="#1b7fc9" />
          <path d="M0.5 8.5C1 3.6 4.6.4 9 .4c5 0 8.600 3.400 8.600 7.400 0 3-2.400 4.400-4.800 4.400-2 0-2.600-.8-2-1.700 1.600-2.400-.4-4.600-3.200-4.600-3 0-5.400 1-7.100 2.600z" fill="#35c1a4" />
          <path d="M0.5 8.500C1 5 4 3.800 7.400 4.500 3.600 6.500 3.400 14.600 9 17.600 4 17.600 0.300 13.600 0.500 8.500z" fill="#1662b0" />
          <path d="M7 9.200c-.6 3 2.200 5.600 9.200 4.600-1.400 2-3 3.100-5 3.600C7.500 16.600 5.300 12.500 7 9.200z" fill="#0f4a94" />
          <path d="M10.800 10.500c1-1.600.5-3.300-1.100-4.100-1.700.8-2.900 2.200-2.700 4 .4 1.700 1.400 2.700 3 3.300 2.700.8 5 .3 7-1.500-3 1.400-7.400.6-6.200-1.700z" fill="#e6eef4" />
        </svg>
      </button>
      <button aria-label="Mail" className="flex w-[37px] items-center justify-center">
        <svg width="19" height="17" viewBox="0 0 19 17">
          <path d="M0.500 6.500L9.500 0.500l9 6v10h-18z" fill="#1565b3" />
          <path d="M2.500 6h14v6h-14z" fill="#fff" />
          <path d="M0.500 6.500l9 5.500 9-5.500v10h-18z" fill="#2a93dd" />
          <path d="M0.500 16.500l9-6 9 6z" fill="#47b2ee" />
        </svg>
      </button>
      <button aria-label="Excel" className="flex w-[34px] items-center justify-center border-b-2 border-[#1b78d0] bg-[#f5f8fa]">
        <ExcelLogo size={17} />
      </button>
      <div className="ml-auto flex items-center pr-[12px]">
        <button aria-label="Show hidden icons">
          <svg width="10" height="6" viewBox="0 0 10 6"><path d="M0.700 5.300L5 1l4.300 4.300" fill="none" stroke="#222" /></svg>
        </button>
        <svg className="ml-[7px]" width="12" height="8" viewBox="0 0 12 8">
          <path d="M0.500 1h9.600v6H0.500z" fill="none" stroke="#222" />
          <path d="M2 2.500h3.500v3H2zM10.500 2.800h1.200v2.400h-1.200z" fill="#222" />
        </svg>
        <svg className="ml-[6px]" width="13" height="13" viewBox="0 0 13 13" fill="none" stroke="#222" strokeWidth="0.9">
          <circle cx="6" cy="6" r="5.400" />
          <ellipse cx="6" cy="6" rx="2.500" ry="5.400" />
          <path d="M0.600 4.200h10.800M0.600 7.800h7" />
          <circle cx="9.800" cy="9.800" r="2.600" fill="#e5e7e4" />
          <path d="M8 8l3.600 3.600" />
        </svg>
        <svg className="ml-[6px]" width="13" height="11" viewBox="0 0 13 11" fill="none" stroke="#222" strokeWidth="0.9">
          <path d="M0.600 3.800h1.800L5 1.200v8.600L2.400 7.200H0.600zM6.800 3.800c.8 1 .8 2.400 0 3.400M8.500 2.400c1.600 1.800 1.600 4.400 0 6.200M10.200 1c2.600 2.600 2.600 6.400 0 9" />
        </svg>
        <div className="ml-[6px] text-center font-['Lato','Open_Sans',sans-serif] text-[8px] leading-[13px]">
          <div>10:59</div>
          <div>03/12/2020</div>
        </div>
        <button aria-label="Notifications" className="ml-[13px]">
          <svg width="19" height="19" viewBox="0 0 19 19">
            <path d="M1 1h12v9.500H7.500L5 13v-2.500H1z" fill="#222" />
            <path d="M3 3.600h8M3 5.800h8M3 8h8" stroke="#e5e7e4" strokeWidth="0.8" />
            <circle cx="12.500" cy="12.500" r="5.600" fill="#d3d5d4" stroke="#8a8d8e" strokeWidth="0.800" />
            <text x="12.500" y="15.500" textAnchor="middle" fontSize="8" fill="#222">2</text>
          </svg>
        </button>
      </div>
    </div>
  );
}

export default function App() {
  return (
    <div className="flex h-screen flex-col overflow-hidden bg-white font-['Open_Sans','Noto_Sans',sans-serif]">
      <TitleBar />
      <RibbonTabs />
      <Ribbon />
      <FormulaBar />
      <main className="flex min-h-0 flex-1 bg-[#d9dde3] pr-[3px]">
        <div className="min-w-0 flex-1 overflow-hidden bg-white">
          <Worksheet />
        </div>
        <VerticalScroll />
      </main>
      <SheetTabs />
      <StatusBar />
      <Taskbar />
    </div>
  );
}
